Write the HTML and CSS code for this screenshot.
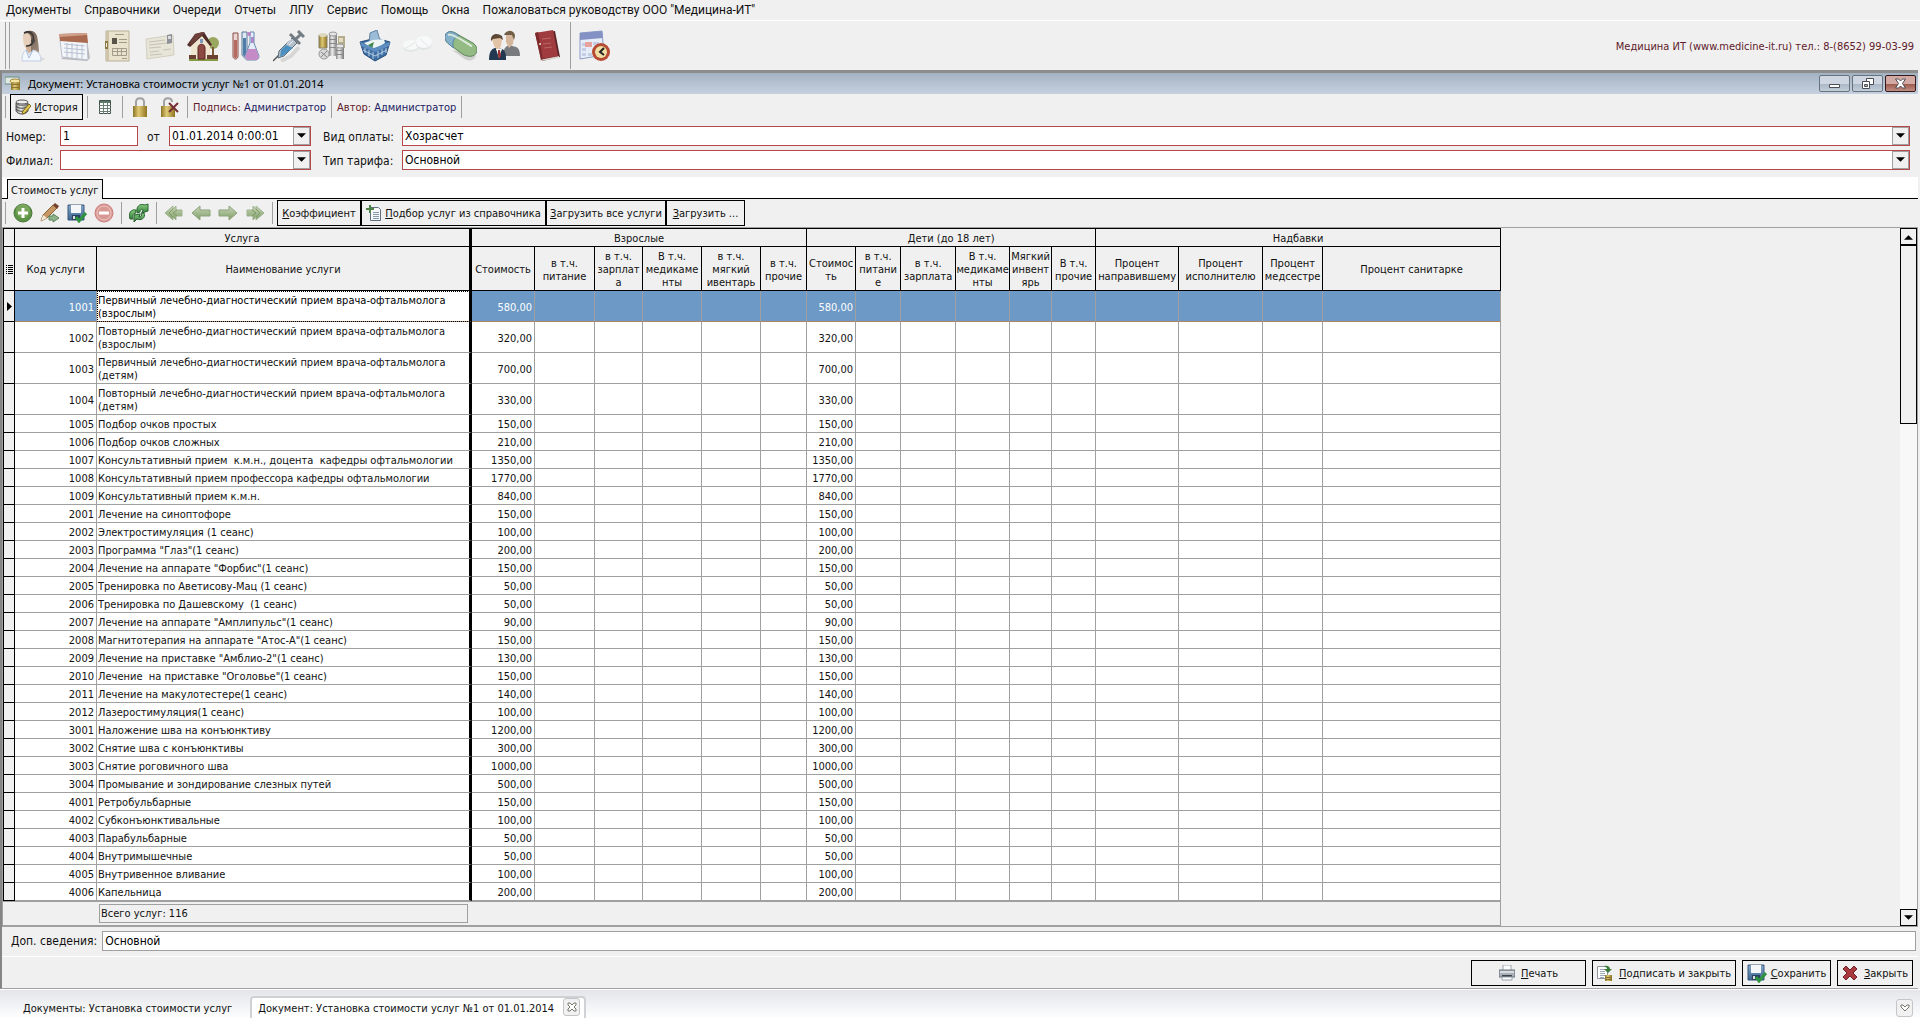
FILE: index.html
```html
<!DOCTYPE html>
<html lang="ru">
<head>
  <meta charset="UTF-8" />
  <meta name="viewport" content="width=device-width, initial-scale=1.0" />
  <title>Документ: Установка стоимости услуг №1 от 01.01.2014</title>
  <link rel="stylesheet" href="styles.css">
</head>
<body>
  <svg class="defs" aria-hidden="true">
    <defs>
      <linearGradient id="green" x1="0" y1="0" x2="0" y2="1"><stop offset="0" stop-color="#8fcf84"/><stop offset="1" stop-color="#2f7d38"/></linearGradient>
      <linearGradient id="pale" x1="0" y1="0" x2="0" y2="1"><stop offset="0" stop-color="#c9d6ba"/><stop offset="1" stop-color="#7f9d66"/></linearGradient>
      <linearGradient id="gold" x1="0" y1="0" x2="1" y2="0"><stop offset="0" stop-color="#8a7428"/><stop offset=".4" stop-color="#e0c975"/><stop offset="1" stop-color="#8f7420"/></linearGradient>
      <linearGradient id="steel" x1="0" y1="0" x2="1" y2="0"><stop offset="0" stop-color="#888"/><stop offset=".4" stop-color="#eee"/><stop offset="1" stop-color="#777"/></linearGradient>
      <linearGradient id="blue" x1="0" y1="0" x2="0" y2="1"><stop offset="0" stop-color="#86a9cb"/><stop offset="1" stop-color="#3a628f"/></linearGradient>
      <linearGradient id="hair" x1="0" y1="0" x2="1" y2="1"><stop offset="0" stop-color="#5f4d42"/><stop offset="1" stop-color="#a08c7c"/></linearGradient>
      <symbol id="floppy" viewBox="0 0 20 20">
        <path d="M1 2h16v15H1z" fill="url(#blue)" stroke="#3b5879"/><path d="M4 2h10v8H4z" fill="#f4f6f8"/><path d="M5 12h8v5H5z" fill="#29405c"/><path d="M6 13h2v3H6z" fill="#ddd"/>
        <path d="M9 14l3 4 7-8" fill="none" stroke="#2f9440" stroke-width="3"/>
      </symbol>
      <symbol id="down" viewBox="0 0 10 6"><path d="M0 0h10L5 5z" fill="#000"/></symbol>
    </defs>
  </svg>

  <nav class="menu">
    <a href="#">Документы</a>
    <a href="#">Справочники</a>
    <a href="#">Очереди</a>
    <a href="#">Отчеты</a>
    <a href="#">ЛПУ</a>
    <a href="#">Сервис</a>
    <a href="#">Помощь</a>
    <a href="#">Окна</a>
    <a href="#">Пожаловаться руководству ООО "Медицина-ИТ"</a>
  </nav>

  <div class="toolbar">
    <span class="grip"></span>
    <button class="tool" aria-label="Регистратура">
      <svg viewBox="0 0 32 32"><ellipse cx="21" cy="29" rx="9" ry="2" fill="#dcdcdc"/><path d="M8 6C10-1 20-1 22 6c1 5 2 12 2 17l-8-1-6-10z" fill="url(#hair)"/><path d="M8 5c3-3 8-2 8 4 0 5-1 8-4 10-3-1-4-7-4-14z" fill="#e6d0bb"/><path d="M11 17l5-3v8l-4 2z" fill="#cdb096"/><path d="M7 31c0-6 1-9 4-11l4 5 3-5c5 1 8 4 8 11z" fill="#f2f6fd" stroke="#c3cfe3"/><path d="M11 20l3 8 4-8" fill="none" stroke="#aebfdb"/><path d="M9 3c5-3 11 0 9 9-1 3-4 4-7 4" fill="none" stroke="#333" stroke-width="1.5"/><circle cx="18" cy="11" r="2" fill="#444"/></svg>
    </button>
    <button class="tool" aria-label="Календарь">
      <svg viewBox="0 0 32 32"><path d="M3 29l26 2 3-3-3-18z" fill="#b9b9bd"/><path d="M2 10l27 2 1 18L4 27z" fill="#f3f5f9" stroke="#b8c0cc"/><path d="M1 4l28-1 1 10L2 11z" fill="#a96a50"/><path d="M1 4l28-1v2L1 7z" fill="#cfa18b"/><path d="M6 14l21 2M6 18l21 2M6 22l21 2M9 13v14M14 13v15M19 14v15M24 14v15" stroke="#b7c1d1" fill="none"/></svg>
    </button>
    <button class="tool" aria-label="Медкарта">
      <svg viewBox="0 0 32 32"><path d="M5 1h23v30H5z" fill="#e9e2cd" stroke="#b9af96"/><path d="M5 1h3v30H5z" fill="#cdc4aa"/><path d="M4 11h3v8H4z" fill="#8c7a40"/><path d="M5 13h1v4H5z" fill="#eee"/><path d="M11 8h5v6h-5z" fill="#5a554b"/><path d="M14 4.500h9M18 9.500h8M18 12.500h8" stroke="#a09a88"/><path d="M11.500 18.500h14v7h-14zM11 21.500h14M16.500 18v7M20.500 18v7M21 28.500h5" fill="none" stroke="#a39c8a"/></svg>
    </button>
    <button class="tool" aria-label="Полис">
      <svg viewBox="0 0 32 32"><path d="M2 9l27-4 1 20L3 29z" fill="#e7e4d8" stroke="#d3cfc0"/><path d="M5 12l16-2M5 15l18-2M5 18l12-1M6 22l9-1M6 25l12-1M19 20l8-1" stroke="#c7c3b4"/><path d="M23 5l5-1v9l-5 1z" fill="#8e9298"/><path d="M24 6h3v3h-3z" fill="#ddd"/></svg>
    </button>
    <button class="tool" aria-label="Вызов на дом">
      <svg viewBox="0 0 32 32"><circle cx="26" cy="13" r="6" fill="#9aa75f"/><path d="M25 17h2v11h-2z" fill="#7b5a33"/><path d="M2 28h29v3H2z" fill="#869a45"/><path d="M4 14L14 4l9 10v15H4z" fill="#f0e6cf"/><path d="M0 15L8 4l9-2 8 13-2 1L15 6 3 17z" fill="#4f2c28"/><path d="M8 4l7-2 3 1-4 3-8 8-4 1z" fill="#6e403a"/><path d="M11 29V18c0-5 7-5 7 0v11z" fill="#8d4a45" stroke="#5e2222"/><path d="M13 9h3v4h-3z" fill="#7b99ba"/><path d="M2 25h7v4H2zM20 25h11v4H20z" fill="#6b3f31"/></svg>
    </button>
    <button class="tool" aria-label="Лаборатория">
      <svg viewBox="0 0 32 32"><path d="M3 3h5v23c0 4-5 4-5 0z" fill="#e9d5d2" stroke="#8b4d45"/><path d="M4 10h3v16c0 3-3 3-3 0z" fill="#b5695f"/><path d="M12 2h5v22c0 4-5 4-5 0z" fill="#dfe9f4" stroke="#557694"/><path d="M13 8h3v16c0 3-3 3-3 0z" fill="#4d7da8"/><path d="M20 2h4v11l5 13c0 3-2 4-4 4h-7c-2 0-4-1-3-4l5-13z" fill="#e5eef8" stroke="#6589ae"/><path d="M18 19h8l3 8-2 3H17l-2-3z" fill="#c58bc7"/><path d="M21 7h3v6h-3z" fill="#a989c9"/><circle cx="19" cy="4" r="2" fill="#b983c4"/></svg>
    </button>
    <button class="tool" aria-label="Процедуры">
      <svg viewBox="0 0 32 32"><path d="M8 31l10-5 8-9" stroke="#d6d6d6" stroke-width="4" fill="none"/><path d="M0 31l8-8" stroke="#555" stroke-width="1.5"/><path d="M6 21L19 8l5 5-13 13-6 2z" fill="#b3c0cb" stroke="#5b6c7a"/><path d="M8 20l5-5 7 3-9 7-4 2z" fill="#4b8fc0"/><path d="M17 4l10 10M22 10l6-6M25 1l6 6" stroke="#747c83" stroke-width="3"/><path d="M18 9l-4 5M20 11l-4 4" stroke="#eef3f7"/></svg>
    </button>
    <button class="tool" aria-label="Склад">
      <svg viewBox="0 0 32 32"><path d="M3 5h8v13H3z" fill="url(#gold)" stroke="#8b856c"/><ellipse cx="7" cy="5" rx="4" ry="2" fill="#ddd7bd"/><ellipse cx="8" cy="24" rx="5" ry="5" fill="#d9d9d9" stroke="#999"/><path d="M5 22l6 5M11 21l-6 6" stroke="#888"/><path d="M22 6h7v12h-7z" fill="#b5ac8b"/><path d="M23 8h4v4h-4z" fill="#e3dcc0"/><path d="M13 4h8v22h-8z" fill="url(#steel)"/><ellipse cx="17" cy="4" rx="4" ry="2" fill="#e4e4e4" stroke="#999"/><path d="M20 16h8v13h-8z" fill="url(#steel)"/><ellipse cx="24" cy="16" rx="4" ry="2" fill="#e4e4e4" stroke="#999"/><path d="M13 9.500h8M13 13.500h8M13 17.500h7M20 20.500h8M20 24.500h8" stroke="#888"/></svg>
    </button>
    <button class="tool" aria-label="Корзина">
      <svg viewBox="0 0 32 32"><path d="M1 12l16-4 14 4-4 13-11 6L5 24z" fill="#3d6fa5" stroke="#274d79"/><path d="M11 3l7-3 4 14-8 6-4-6z" fill="#9bbbd6" stroke="#5f83a3"/><path d="M5 13l9-3 11-1 1 4-11 7z" fill="#edf4f4"/><path d="M9 15l6-3-2 7z" fill="#3f8a4a"/><path d="M1 12l14 6 16-6-1 4-14 6L2 16z" fill="#5e8ec0"/><path d="M6 18v5M10 20v6M14 22v7M19 21v7M23 19v6M27 18v5M4 20l12 6 12-6" stroke="#b9cde2" fill="none"/></svg>
    </button>
    <button class="tool" aria-label="Таблетки">
      <svg viewBox="0 0 32 32"><ellipse cx="9" cy="17" rx="8" ry="5" fill="#e1e6e7"/><ellipse cx="9" cy="15" rx="8" ry="5" fill="#f7f9f9"/><ellipse cx="22" cy="14" rx="8" ry="6" fill="#dfe4e6"/><ellipse cx="22" cy="12" rx="8" ry="6" fill="#f8fafa"/><path d="M4 18l10-6M18 9l8 7" stroke="#e0e5e6"/></svg>
    </button>
    <button class="tool" aria-label="Лекарства">
      <svg viewBox="1 0 34 32"><path d="M8 20l14 10c5 3 11 1 12-4z" fill="#cfd2cf"/><path d="M3 2c4-3 9 0 12 2l16 9c7 5 4 14-3 14-5 0-8-2-12-5L4 13C0 9 0 5 3 2z" fill="#94bb84" stroke="#587e53"/><path d="M3 2c4-3 9 0 13 3-5 1-8 7-6 13l-6-5C0 9 0 5 3 2z" fill="#85b0ca" stroke="#56849f"/><path d="M5 4c5-1 16 7 24 12" stroke="#dcebdc" stroke-width="2" fill="none" stroke-linecap="round"/></svg>
    </button>
    <button class="tool" aria-label="Сотрудники">
      <svg viewBox="0 0 32 32"><path d="M15 25c0-6 3-9 6-10l7 2c3 1 4 5 4 9H16z" fill="#787b7e"/><path d="M18 3c3-5 9-2 8 3l-1 8-4 4-3-6z" fill="#d4b79a"/><path d="M16 5c2-6 11-5 11 1l-1 4-2-5z" fill="#715e47"/><path d="M1 30c0-8 2-11 6-12l7 1c4 2 4 6 4 11z" fill="#223951"/><path d="M4 9c2-5 10-5 10 1l-1 6-3 5-4-5z" fill="#e2c3a5"/><path d="M3 11C2 4 9 2 14 6l1 4-3-2-7 1z" fill="#5d4936"/><path d="M8 19h6l-3 9z" fill="#fff"/><path d="M10 20h2l1 6-2 3-1-4z" fill="#a13131"/></svg>
    </button>
    <button class="tool" aria-label="Справочник">
      <svg viewBox="0 0 32 32"><path d="M5 3l19-2 5 26-18 4z" fill="#5c2527"/><path d="M8 30l20-4v2L10 31z" fill="#ddd5cc"/><path d="M4 3l18-3 5 26-17 3z" fill="#a03c3f"/><path d="M4 3l3-1 5 27-2 1z" fill="#7d2a2d"/><path d="M11 9l9-1M12 14l8-1M13 18l8-1" stroke="#b96666"/><circle cx="9" cy="14" r="1" fill="#f4e5d5"/></svg>
    </button>
    <span class="split"></span>
    <button class="tool" aria-label="Расписание">
      <svg viewBox="0 0 32 32"><path d="M2 3l22-2 2 24-24 4z" fill="#e6ecf8" stroke="#8f9dc6"/><path d="M2 3l22-2 1 7L2 10z" fill="#8391c4"/><path d="M4 13h4v3H4zM15 12h6v3h-6zM4 18h4v3H4zM4 23h4v3H4zM10 23h4v3h-4z" fill="#c4cfe5"/><path d="M7 12h7v5H7z" fill="#e6a29c"/><circle cx="23" cy="22" r="9" fill="#b64a33"/><circle cx="23" cy="22" r="6" fill="#f0dfa5"/><path d="M26 18l-4 4 4 3" stroke="#222" stroke-width="2" fill="none"/></svg>
    </button>
    <span class="contacts">Медицина ИТ (www.medicine-it.ru) тел.: 8-(8652) 99-03-99</span>
  </div>

  <main class="window">
    <div class="titlebar">
      <svg class="icon16" viewBox="0 0 16 16"><path d="M0 1h14v7H0z" fill="#dfe8e2" stroke="#6f8b7d"/><path d="M6 6h9v8H6z" fill="url(#gold)"/><path d="M6 8.500h9M6 11.500h9" stroke="#8c7530"/><ellipse cx="10" cy="5" rx="5" ry="2" fill="#f4e5a4" stroke="#a58b3d"/></svg>
      <h1>Документ: Установка стоимости услуг №1 от 01.01.2014</h1>
      <button class="win-btn" aria-label="Свернуть"><svg viewBox="0 0 13 13"><path d="M1.500 7.500h10v3h-10z" fill="#fff" stroke="#4d4d55"/></svg></button>
      <button class="win-btn" aria-label="Восстановить"><svg viewBox="0 0 13 13"><path d="M5.500 1.500h7v6h-7z" fill="#fff" stroke="#4d4d55"/><path d="M1.500 4.500h7v7h-7z" fill="#fff" stroke="#4d4d55"/><path d="M3.500 7.500h3v2h-3z" fill="#bbb" stroke="#4d4d55"/></svg></button>
      <button class="win-btn close" aria-label="Закрыть окно"><svg viewBox="0 0 13 13"><path d="M1.500 2h3l2 2 2-2h3L8.500 6.500l3 4.500h-3l-2-2-2 2h-3l3-4.500z" fill="#fff" stroke="#4d4d55"/></svg></button>
    </div>

    <div class="doc-bar">
      <span class="sep"></span>
      <button class="btn history">
        <svg class="icon16" viewBox="0 0 16 16"><ellipse cx="7" cy="3" rx="6" ry="2" fill="#eee" stroke="#555"/><path d="M1 4v8c2 4 10 4 12 0V4c-2 3-10 3-12 0z" fill="url(#steel)" stroke="#555"/><path d="M1 7c2 3 10 3 12 0M1 10c2 3 10 3 12 0" fill="none" stroke="#444"/><path d="M7 15l1-3 6-7 2 2-6 7z" fill="#e5c84e" stroke="#7c6922"/></svg>
        <span><u>И</u>стория</span>
      </button>
      <span class="sep"></span>
      <button class="flat table-btn" aria-label="Таблица"><svg class="icon16" viewBox="0 0 16 16"><path d="M2.500 1.500h11v13h-11z" fill="#fff" stroke="#405348"/><path d="M3 2h10v2H3z" fill="#5d7b69"/><path d="M2 6.500h12M2 9.500h12M2 12.500h12M6.500 4v11M10.500 4v11" stroke="#6b7e73"/></svg></button>
      <span class="sep"></span>
      <button class="flat" aria-label="Провести"><svg class="icon20" viewBox="0 0 20 20"><path d="M6 10V5c0-5 8-5 8 0v5" fill="none" stroke="#a2a2a2" stroke-width="2"/><path d="M3 9h14v11H3z" fill="url(#gold)"/></svg></button>
      <button class="flat" aria-label="Отменить проведение"><svg class="icon20" viewBox="0 0 20 20"><path d="M4 10V5c0-5 8-5 8 0" fill="none" stroke="#a2a2a2" stroke-width="2"/><path d="M1 9h14v11H1z" fill="url(#gold)"/><path d="M9 6l9 9M18 6l-9 9" stroke="#753036" stroke-width="2"/></svg></button>
      <span class="sep"></span>
      <span class="sign">Подпись: <b>Администратор</b></span>
      <span class="sep"></span>
      <span class="sign">Автор: <b>Администратор</b></span>
      <span class="sep"></span>
    </div>

    <form class="fields">
      <label for="number">Номер:</label>
      <div class="pair">
        <input class="box number" id="number" type="text" value="1">
        <label for="date">от</label>
        <div class="box combo">
          <input id="date" type="text" value="01.01.2014 0:00:01">
          <button type="button" aria-label="Выбрать дату"><svg><use href="#down"/></svg></button>
        </div>
      </div>
      <label for="payment">Вид оплаты:</label>
      <div class="box combo">
        <select id="payment"><option>Хозрасчет</option></select>
        <span class="arrow"><svg><use href="#down"/></svg></span>
      </div>
      <label for="branch">Филиал:</label>
      <div class="box combo">
        <select id="branch"><option></option></select>
        <span class="arrow"><svg><use href="#down"/></svg></span>
      </div>
      <label for="tariff">Тип тарифа:</label>
      <div class="box combo">
        <select id="tariff"><option>Основной</option></select>
        <span class="arrow"><svg><use href="#down"/></svg></span>
      </div>
    </form>

    <div class="tabs"><button class="tab">Стоимость услуг</button></div>

    <div class="grid-bar">
      <span class="sep"></span>
      <button class="flat" aria-label="Добавить"><svg class="icon20" viewBox="0 0 20 20"><circle cx="10" cy="10" r="9" fill="#5b9445" stroke="#49753a"/><circle cx="10" cy="8" r="7" fill="#78a55b"/><path d="M10 5v10M5 10h10" stroke="#fff" stroke-width="3"/></svg></button>
      <button class="flat" aria-label="Изменить"><svg class="icon20" viewBox="0 0 20 20"><path d="M1 18l2-6L13 2l4 3L7 15z" fill="#c69762" stroke="#8a6238"/><path d="M13 2l2-2 4 3-2 3z" fill="#74412f"/><path d="M1 18l2-6 4 3z" fill="#f3e9d8"/><path d="M9 13h4v-2l6 4-6 4v-2H9z" fill="#8db38a" stroke="#5c845c"/></svg></button>
      <button class="flat" aria-label="Сохранить строку"><svg class="icon20"><use href="#floppy"/></svg></button>
      <button class="flat" aria-label="Удалить"><svg class="icon20" viewBox="0 0 20 20"><circle cx="10" cy="10" r="9" fill="#d99894" stroke="#c97f7c"/><circle cx="10" cy="10" r="7" fill="none" stroke="#ecc5c2"/><path d="M5 10h10" stroke="#fff" stroke-width="3"/></svg></button>
      <span class="sep"></span>
      <button class="flat" aria-label="Обновить"><svg class="icon20" viewBox="0 0 20 20"><path d="M8 10C7 4 10 0 16 2l3-1v7l-6 2 1-3c-2-1-3 0-3 2z" fill="url(#green)" stroke="#2c6732"/><path d="M15 10c2 5-3 8-7 6l-3 3v-7l6-1-1 3c2 0 3-1 2-4z" fill="url(#green)" stroke="#255d2e"/><path d="M1 16c-2-6 1-10 6-9l-1 4c-2 0-3 1-2 5z" fill="url(#green)" stroke="#2c6732"/></svg></button>
      <span class="sep"></span>
      <button class="flat" aria-label="Первая"><svg class="icon20" viewBox="0 0 20 20"><path d="M1 10l8-7v3l3-3v4h6v6h-6v4l-3-3v3z" fill="url(#pale)" stroke="#9fb38f"/><path d="M9 6l-4 4 4 4M13 7l-4 3 4 3" fill="none" stroke="#7c9a63"/></svg></button>
      <button class="flat" aria-label="Предыдущая"><svg class="icon20" viewBox="0 0 20 20"><path d="M1 10l8-7v4h10v6H9v4z" fill="url(#pale)" stroke="#8ba37a"/></svg></button>
      <button class="flat" aria-label="Следующая"><svg class="icon20" viewBox="0 0 20 20"><path d="M19 10l-8-7v4H1v6h10v4z" fill="url(#pale)" stroke="#8ba37a"/></svg></button>
      <button class="flat" aria-label="Последняя"><svg class="icon20" viewBox="0 0 20 20"><path d="M19 10l-8-7v3L8 3v4H2v6h6v4l3-3v3z" fill="url(#pale)" stroke="#9fb38f"/><path d="M11 6l4 4-4 4M7 7l4 3-4 3" fill="none" stroke="#7c9a63"/></svg></button>
      <span class="sep"></span>
      <div class="btn-row">
        <button class="btn coef"><span><u>К</u>оэффициент</span></button>
        <button class="btn pick">
          <svg class="icon16" viewBox="0 0 16 16"><path d="M4.500 2.500h8l2 2v11h-10z" fill="#f5f7f9" stroke="#607080"/><path d="M7 7.500h6M7 9.500h6M7 11.500h6M7 13.500h6" stroke="#8796a8"/><path d="M4 0v8M0 4h8" stroke="#4b8046" stroke-width="2"/></svg>
          <span><u>П</u>одбор услуг из справочника</span>
        </button>
        <button class="btn all"><span><u>З</u>агрузить все услуги</span></button>
        <button class="btn load"><span><u>З</u>агрузить ...</span></button>
      </div>
    </div>

    <div class="grid">
      <table class="services">
        <colgroup>
          <col class="w-mark"><col class="w-code"><col class="w-name">
          <col class="w-63"><col class="w-60"><col class="w-48"><col class="w-59"><col class="w-59"><col class="w-46">
          <col class="w-49"><col class="w-45"><col class="w-55"><col class="w-54"><col class="w-42"><col class="w-44">
          <col class="w-83"><col class="w-84"><col class="w-60"><col class="w-178">
        </colgroup>
        <thead>
          <tr class="bands">
            <th></th>
            <th colspan="2" class="fixed">Услуга</th>
            <th colspan="6">Взрослые</th>
            <th colspan="6">Дети (до 18 лет)</th>
            <th colspan="4">Надбавки</th>
          </tr>
          <tr class="heads">
            <th><svg class="list" viewBox="0 0 7 10"><path d="M0 .5h1M2 .5h5M0 2.500h1M2 2.500h5M0 4.500h1M2 4.500h5M0 6.500h1M2 6.500h5M0 8.500h1M2 8.500h5" stroke="#000"/></svg></th>
            <th>Код услуги</th>
            <th class="fixed">Наименование услуги</th>
            <th>Стоимость</th>
            <th>в т.ч.<br>питание</th>
            <th>в т.ч.<br>зарплат<br>а</th>
            <th>В т.ч.<br>медикаме<br>нты</th>
            <th>в т.ч.<br>мягкий<br>ивентарь</th>
            <th>в т.ч.<br>прочие</th>
            <th>Стоимос<br>ть</th>
            <th>в т.ч.<br>питани<br>е</th>
            <th>в т.ч.<br>зарплата</th>
            <th>В т.ч.<br>медикаме<br>нты</th>
            <th>Мягкий<br>инвент<br>ярь</th>
            <th>В т.ч.<br>прочие</th>
            <th>Процент<br>направившему</th>
            <th>Процент<br>исполнителю</th>
            <th>Процент<br>медсестре</th>
            <th>Процент санитарке</th>
          </tr>
        </thead>
        <tbody id="rows"></tbody>
        <tfoot>
          <tr>
            <td colspan="2"></td>
            <td><div class="total">Всего услуг: 116</div></td>
            <td colspan="16" class="last"></td>
          </tr>
        </tfoot>
      </table>
      <div class="scroll">
        <button aria-label="Вверх"><svg viewBox="0 0 10 6"><path d="M0 6h10L5 1z"/></svg></button>
        <div class="track"><div class="thumb"></div></div>
        <button aria-label="Вниз"><svg><use href="#down"/></svg></button>
      </div>
    </div>

    <div class="note">
      <label for="note">Доп. сведения:</label>
      <input class="box" id="note" type="text" value="Основной">
    </div>

    <div class="actions">
      <button class="btn print">
        <svg class="icon16" viewBox="0 0 16 16"><path d="M4 0h8v6H4z" fill="#fff" stroke="#9aa4af"/><path d="M0 5h16v7H0z" fill="#a9b0b8" stroke="#6b737c"/><path d="M1 6h14v2H1z" fill="#d9dde1"/><path d="M3 10h10v2H3z" fill="#3e444a"/><path d="M3 12h10v3H3z" fill="#fff" stroke="#9aa4af"/></svg>
        <span><u>П</u>ечать</span>
      </button>
      <button class="btn sign-close">
        <svg class="icon16" viewBox="0 0 16 16"><path d="M.5 1.500h10v12H.5z" fill="#fff" stroke="#8e979f"/><path d="M3 4.500h6M3 6.500h5M3 8.500h5M3 10.500h5M3 12.500h4" stroke="#9aa7b2"/><path d="M7 1c4-1 6 1 6 3h2l-4 4-4-4h3c0-1-1-2-3-3z" fill="#3c7a3c"/><path d="M8 10h7v6H8z" fill="url(#gold)"/><path d="M8 12.500h7M8 14.500h7" stroke="#82702c"/></svg>
        <span><u>П</u>одписать и закрыть</span>
      </button>
      <button class="btn save">
        <svg class="icon20"><use href="#floppy"/></svg>
        <span><u>С</u>охранить</span>
      </button>
      <button class="btn exit">
        <svg class="icon16" viewBox="0 0 16 16"><path d="M1 4l3-3 4 4 4-4 3 3-4 4 4 4-3 3-4-4-4 4-3-3 4-4z" fill="#a83a3e" stroke="#702228"/></svg>
        <span><u>З</u>акрыть</span>
      </button>
    </div>
  </main>

  <footer class="taskbar">
    <a class="task" href="#">Документы: Установка стоимости услуг</a>
    <div class="task active">
      <a href="#">Документ: Установка стоимости услуг №1 от 01.01.2014</a>
      <button class="mini" aria-label="Закрыть вкладку"><svg viewBox="0 0 10 10"><path d="M1 1h2l2 2 2-2h2v2L7 5l2 2v2H7L5 7 3 9H1V7l2-2-2-2z" fill="#fff" stroke="#77776c"/></svg></button>
    </div>
    <button class="mini more" aria-label="Список окон"><svg viewBox="0 0 10 10"><path d="M1 2h2l2 2 2-2h2v2L5 8 1 4z" fill="#fff" stroke="#77776c"/></svg></button>
  </footer>
  <script src="script.js"></script>
</body>
</html>
```
FILE: styles.css
```css
* {
  box-sizing: border-box;
}
body {
  margin: 0;
  min-height: 100vh;
  display: flex;
  flex-direction: column;
  background: #f0f0f0;
  color: #111;
  font-family: "DejaVu Sans Condensed", "DejaVu Sans", sans-serif;
  font-size: 11px;
  line-height: 13px;
}
button, input, select {
  font: inherit;
  color: inherit;
  margin: 0;
  padding: 0;
  border: 0;
  border-radius: 0;
  background: none;
}
a {
  color: inherit;
  text-decoration: none;
}
svg {
  display: block;
  flex: none;
}
.defs {
  position: absolute;
  width: 0;
  height: 0;
}
.icon16 {
  width: 16px;
  height: 16px;
}
.icon20 {
  width: 20px;
  height: 20px;
}

/* main menu */
.menu {
  display: flex;
  gap: 13px;
  padding: 2px 6px;
  border-bottom: 1px solid #fff;
  font-family: Roboto, sans-serif;
  font-size: 12px;
  line-height: 16px;
}
.toolbar {
  display: flex;
  align-items: center;
  gap: 11px;
  height: 49px;
  padding: 0 6px 0 5px;
}
.tool svg {
  width: 32px;
  height: 32px;
}
.grip {
  width: 5px;
  height: 47px;
  margin-right: -6px;
  border-left: 1px solid #a0a0a0;
  border-right: 1px solid #a0a0a0;
}
.split {
  width: 1px;
  height: 47px;
  margin: 0 -4px;
  background: #a0a0a0;
}
.contacts {
  margin-left: auto;
  padding-top: 1px;
  color: #60202a;
}

/* document window */
.window {
  flex: 1;
  display: flex;
  flex-direction: column;
  margin-right: 2px;
  border-top: 3px solid #8d8d8d;
  border-left: 2px solid #858585;
  border-bottom: 1px solid #a0a0a0;
}
.titlebar {
  display: flex;
  align-items: center;
  gap: 2px;
  height: 21px;
  padding: 0 2px 0 3px;
  background: linear-gradient(#a3b2c2, #c6d1df);
}
.titlebar h1 {
  flex: 1;
  margin: 0 0 0 5px;
  font: 11px "Noto Sans", sans-serif;
  color: #000;
}
.win-btn {
  display: flex;
  align-items: center;
  justify-content: center;
  width: 31px;
  height: 17px;
  border: 1px solid #68727f;
  border-radius: 2px;
  background: linear-gradient(#cdd6e1 50%, #a9b5c3 50%, #c3cedb);
}
.win-btn.close {
  border-color: #35191c;
  background: linear-gradient(#d3aaa3 50%, #9c5548 50%, #bf8f83);
}
.win-btn svg {
  width: 13px;
  height: 13px;
}
.doc-bar {
  display: flex;
  align-items: center;
  gap: 4px;
  height: 26px;
  padding-left: 3px;
}
.sep {
  width: 1px;
  height: 22px;
  background: #a0a0a0;
}
.btn {
  display: flex;
  align-items: center;
  justify-content: center;
  gap: 6px;
  height: 26px;
  border: 1px solid #000;
  background: #f0f0f0;
  white-space: nowrap;
}
.btn span {
  padding-top: 1px;
}
.btn.history {
  width: 73px;
  gap: 3px;
}
.doc-bar .flat {
  padding: 0 3px;
}
.doc-bar .table-btn {
  padding: 0 5px;
}
.sign {
  padding: 0 1px;
  color: #60202a;
}
.sign b {
  font-weight: normal;
  color: #222062;
}

/* form */
.fields {
  display: grid;
  grid-template-columns: 50px 251px 83px 1fr;
  align-items: center;
  gap: 4px;
  padding: 6px 8px 7px 4px;
  font-size: 12px;
}
.fields label {
  padding-top: 2px;
  white-space: nowrap;
}
.fields label[for="payment"],
.fields label[for="tariff"] {
  padding-left: 8px;
}
.pair {
  display: flex;
  align-items: center;
}
.fields .pair label {
  padding: 2px 9px 0;
}
.pair .combo {
  flex: 1;
}
.box {
  height: 20px;
  border: 1px solid #b8474b;
  background: #fff;
  font-size: 12px;
  color: #000;
}
.number {
  width: 78px;
  padding: 0 2px;
}
.combo {
  display: flex;
  min-width: 0;
}
.combo input, .combo select {
  flex: 1;
  min-width: 0;
  padding: 0 2px;
  appearance: none;
}
.combo button, .arrow {
  display: flex;
  align-items: center;
  justify-content: center;
  width: 17px;
  border: 1px solid #a0a0a0;
  background: #f0f0f0;
}
.combo svg, .scroll svg {
  width: 9px;
  height: 6px;
}

/* tab and grid toolbar */
.tabs {
  padding: 2px 5px 0;
  background: #fff;
  border-bottom: 1px solid #000;
}
.tab {
  display: block;
  height: 20px;
  margin-bottom: -1px;
  padding: 2px 3px 0;
  border: 1px solid #000;
  border-bottom: 0;
  background: #f0f0f0;
}
.grid-bar {
  display: flex;
  align-items: center;
  gap: 7px;
  height: 28px;
  padding-left: 3px;
}
.btn-row {
  display: flex;
  margin-left: -3px;
}
.coef {
  width: 84px;
}
.pick {
  width: 185px;
  gap: 3px;
}
.all {
  width: 120px;
}
.load {
  width: 79px;
}

/* services grid */
.grid {
  flex: 1;
  display: flex;
  align-items: stretch;
  justify-content: space-between;
  border: 1px solid #a0a0a0;
}
.services {
  table-layout: fixed;
  width: 1498px;
  height: 100%;
  border-collapse: separate;
  border-spacing: 0;
  border-top: 1px solid #000;
}
.services th {
  padding: 3px 0 1px;
  border-right: 1px solid #000;
  border-bottom: 1px solid #000;
  font-weight: normal;
  white-space: nowrap;
}
.services .heads th {
  height: 44px;
}
.services th:first-child {
  border-left: 1px solid #000;
}
.services .fixed {
  border-right: 3px solid #000;
}
.services td {
  padding: 3px 2px 1px;
  border-right: 1px solid #a0a0a0;
  border-bottom: 1px solid #a0a0a0;
}
.services tbody td {
  background: #fff;
}
.services tbody td.mark {
  padding: 0 2px;
  border: 1px solid #000;
  border-top: 0;
  background: #f0f0f0;
}
.mark svg {
  width: 5px;
  height: 9px;
  margin: auto;
}
.list {
  width: 7px;
  height: 10px;
  margin: auto;
}
.services .num {
  text-align: right;
  white-space: nowrap;
}
.services td.name {
  padding: 3px 1px 1px;
  white-space: pre-wrap;
}
.services .current td {
  background: #6c99c6;
  color: #fff;
  border-bottom-color: #b0835c;
}
.services .current td.name {
  background: #fff;
  color: #000;
  outline: 1px dotted #000;
  outline-offset: -1px;
}
.services tfoot td {
  padding: 2px 4px 2px 2px;
  border-top: 1px solid #a0a0a0;
  border-right: 0;
}
.services tfoot .last {
  border-right: 1px solid #a0a0a0;
}
.total {
  padding: 2px 1px;
  border: 1px solid #a0a0a0;
}
.w-mark { width: 12px; }
.w-code { width: 82px; }
.w-name { width: 375px; }
.w-42 { width: 42px; }
.w-44 { width: 44px; }
.w-45 { width: 45px; }
.w-46 { width: 46px; }
.w-48 { width: 48px; }
.w-49 { width: 49px; }
.w-54 { width: 54px; }
.w-55 { width: 55px; }
.w-59 { width: 59px; }
.w-60 { width: 60px; }
.w-63 { width: 63px; }
.w-83 { width: 83px; }
.w-84 { width: 84px; }
.w-178 { width: 178px; }
.scroll {
  display: flex;
  flex-direction: column;
  width: 17px;
}
.scroll button {
  display: flex;
  align-items: center;
  justify-content: center;
  height: 17px;
  border: 1px solid #000;
  background: #f0f0f0;
}
.track {
  flex: 1;
  background: #f8f8f8;
}
.thumb {
  height: 27%;
  border: 1px solid #000;
  background: #f0f0f0;
}

/* bottom part of the window */
.note {
  display: flex;
  align-items: center;
  gap: 5px;
  padding: 4px 2px 5px 9px;
  border-bottom: 1px solid #fff;
  font-size: 12px;
}
.note .box {
  flex: 1;
  padding: 0 2px;
  border-color: #a0a0a0;
}
.actions {
  display: flex;
  justify-content: flex-end;
  gap: 6px;
  padding: 3px 5px 2px;
}
.print {
  width: 115px;
}
.sign-close {
  width: 144px;
}
.save {
  width: 89px;
  gap: 4px;
}
.exit {
  width: 76px;
}
.taskbar {
  display: flex;
  align-items: flex-end;
  gap: 18px;
  height: 30px;
  padding: 0 7px 0 23px;
  border-top: 1px solid #fff;
  background: linear-gradient(#e3e5e9, #fff);
}
.task {
  line-height: 21px;
}
.task.active {
  display: flex;
  gap: 9px;
  padding: 0 4px 0 6px;
  border: 2px solid #cfd1d4;
  border-bottom: 0;
  border-radius: 4px 4px 0 0;
  background: #fff;
}
.mini {
  display: flex;
  align-items: center;
  justify-content: center;
  width: 17px;
  height: 18px;
  border: 1px solid #c3c5c8;
  border-radius: 3px;
  background: #f1f1f2;
}
.mini svg {
  width: 10px;
  height: 10px;
}
.more {
  margin: 0 0 2px auto;
}
```
FILE: script.js
```javascript
const services = [
  [1001, 'Первичный лечебно-диагностический прием врача-офтальмолога\n(взрослым)', 580],
  [1002, 'Повторный лечебно-диагностический прием врача-офтальмолога\n(взрослым)', 320],
  [1003, 'Первичный лечебно-диагностический прием врача-офтальмолога\n(детям)', 700],
  [1004, 'Повторный лечебно-диагностический прием врача-офтальмолога\n(детям)', 330],
  [1005, 'Подбор очков простых', 150],
  [1006, 'Подбор очков сложных', 210],
  [1007, 'Консультативный прием  к.м.н., доцента  кафедры офтальмологии', 1350],
  [1008, 'Консультативный прием профессора кафедры офтальмологии', 1770],
  [1009, 'Консультативный прием к.м.н.', 840],
  [2001, 'Лечение на синоптофоре', 150],
  [2002, 'Электростимуляция (1 сеанс)', 100],
  [2003, 'Программа "Глаз"(1 сеанс)', 200],
  [2004, 'Лечение на аппарате "Форбис"(1 сеанс)', 150],
  [2005, 'Тренировка по Аветисову-Мац (1 сеанс)', 50],
  [2006, 'Тренировка по Дашевскому  (1 сеанс)', 50],
  [2007, 'Лечение на аппарате "Амплипульс"(1 сеанс)', 90],
  [2008, 'Магнитотерапия на аппарате "Атос-А"(1 сеанс)', 150],
  [2009, 'Лечение на приставке "Амблио-2"(1 сеанс)', 130],
  [2010, 'Лечение  на приставке "Оголовье"(1 сеанс)', 150],
  [2011, 'Лечение на макулотестере(1 сеанс)', 140],
  [2012, 'Лазеростимуляция(1 сеанс)', 100],
  [3001, 'Наложение шва на конъюнктиву', 1200],
  [3002, 'Снятие шва с конъюнктивы', 300],
  [3003, 'Снятие роговичного шва', 1000],
  [3004, 'Промывание и зондирование слезных путей', 500],
  [4001, 'Ретробульбарные', 150],
  [4002, 'Субконъюнктивальные', 100],
  [4003, 'Парабульбарные', 50],
  [4004, 'Внутримышечные', 50],
  [4005, 'Внутривенное вливание', 100],
  [4006, 'Капельница', 200]
];

const marker = '<svg viewBox="0 0 5 9"><path d="M0 0l5 4.500L0 9z"/></svg>';
const empty = n => '<td></td>'.repeat(n);

document.getElementById('rows').innerHTML = services.map(([code, name, price], i) => {
  const cost = `<td class="num">${price},00</td>`;
  return `<tr class="${i === 0 ? 'current' : ''}">
    <td class="mark">${i === 0 ? marker : ''}</td>
    <td class="num">${code}</td>
    <td class="name fixed">${name}</td>
    ${cost}${empty(5)}${cost}${empty(9)}
  </tr>`;
}).join('');
```
